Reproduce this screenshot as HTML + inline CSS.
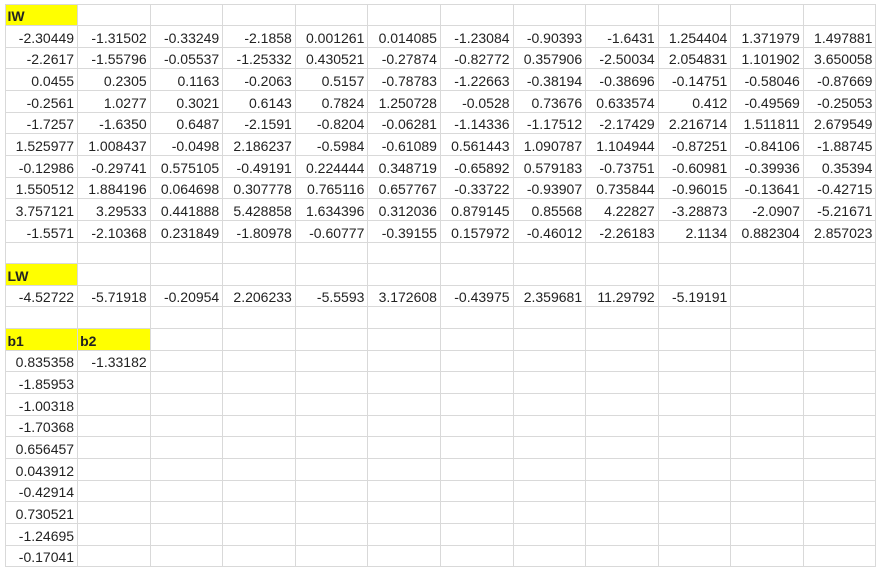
<!DOCTYPE html>
<html><head><style>
html,body{margin:0;padding:0;background:#fff;width:880px;height:572px;overflow:hidden}
table{position:absolute;left:4.5px;top:3.5px;border-collapse:collapse;table-layout:fixed;width:871px;font-family:"Liberation Sans",sans-serif;font-size:14px;color:#222}
td{border:1px solid #d9d9d9;height:20.65px;padding:0 3px 0 3px;text-align:right;vertical-align:bottom;line-height:18px;white-space:nowrap;overflow:hidden}
td.y{background:#ffff00;font-weight:bold;text-align:left;padding-left:2px}
</style></head><body>
<table>
<colgroup><col span="12" style="width:72.58px"></colgroup>
<tr><td class="y">IW</td><td></td><td></td><td></td><td></td><td></td><td></td><td></td><td></td><td></td><td></td><td></td></tr>
<tr><td>-2.30449</td><td>-1.31502</td><td>-0.33249</td><td>-2.1858</td><td>0.001261</td><td>0.014085</td><td>-1.23084</td><td>-0.90393</td><td>-1.6431</td><td>1.254404</td><td>1.371979</td><td>1.497881</td></tr>
<tr><td>-2.2617</td><td>-1.55796</td><td>-0.05537</td><td>-1.25332</td><td>0.430521</td><td>-0.27874</td><td>-0.82772</td><td>0.357906</td><td>-2.50034</td><td>2.054831</td><td>1.101902</td><td>3.650058</td></tr>
<tr><td>0.0455</td><td>0.2305</td><td>0.1163</td><td>-0.2063</td><td>0.5157</td><td>-0.78783</td><td>-1.22663</td><td>-0.38194</td><td>-0.38696</td><td>-0.14751</td><td>-0.58046</td><td>-0.87669</td></tr>
<tr><td>-0.2561</td><td>1.0277</td><td>0.3021</td><td>0.6143</td><td>0.7824</td><td>1.250728</td><td>-0.0528</td><td>0.73676</td><td>0.633574</td><td>0.412</td><td>-0.49569</td><td>-0.25053</td></tr>
<tr><td>-1.7257</td><td>-1.6350</td><td>0.6487</td><td>-2.1591</td><td>-0.8204</td><td>-0.06281</td><td>-1.14336</td><td>-1.17512</td><td>-2.17429</td><td>2.216714</td><td>1.511811</td><td>2.679549</td></tr>
<tr><td>1.525977</td><td>1.008437</td><td>-0.0498</td><td>2.186237</td><td>-0.5984</td><td>-0.61089</td><td>0.561443</td><td>1.090787</td><td>1.104944</td><td>-0.87251</td><td>-0.84106</td><td>-1.88745</td></tr>
<tr><td>-0.12986</td><td>-0.29741</td><td>0.575105</td><td>-0.49191</td><td>0.224444</td><td>0.348719</td><td>-0.65892</td><td>0.579183</td><td>-0.73751</td><td>-0.60981</td><td>-0.39936</td><td>0.35394</td></tr>
<tr><td>1.550512</td><td>1.884196</td><td>0.064698</td><td>0.307778</td><td>0.765116</td><td>0.657767</td><td>-0.33722</td><td>-0.93907</td><td>0.735844</td><td>-0.96015</td><td>-0.13641</td><td>-0.42715</td></tr>
<tr><td>3.757121</td><td>3.29533</td><td>0.441888</td><td>5.428858</td><td>1.634396</td><td>0.312036</td><td>0.879145</td><td>0.85568</td><td>4.22827</td><td>-3.28873</td><td>-2.0907</td><td>-5.21671</td></tr>
<tr><td>-1.5571</td><td>-2.10368</td><td>0.231849</td><td>-1.80978</td><td>-0.60777</td><td>-0.39155</td><td>0.157972</td><td>-0.46012</td><td>-2.26183</td><td>2.1134</td><td>0.882304</td><td>2.857023</td></tr>
<tr><td></td><td></td><td></td><td></td><td></td><td></td><td></td><td></td><td></td><td></td><td></td><td></td></tr>
<tr><td class="y">LW</td><td></td><td></td><td></td><td></td><td></td><td></td><td></td><td></td><td></td><td></td><td></td></tr>
<tr><td>-4.52722</td><td>-5.71918</td><td>-0.20954</td><td>2.206233</td><td>-5.5593</td><td>3.172608</td><td>-0.43975</td><td>2.359681</td><td>11.29792</td><td>-5.19191</td><td></td><td></td></tr>
<tr><td></td><td></td><td></td><td></td><td></td><td></td><td></td><td></td><td></td><td></td><td></td><td></td></tr>
<tr><td class="y">b1</td><td class="y">b2</td><td></td><td></td><td></td><td></td><td></td><td></td><td></td><td></td><td></td><td></td></tr>
<tr><td>0.835358</td><td>-1.33182</td><td></td><td></td><td></td><td></td><td></td><td></td><td></td><td></td><td></td><td></td></tr>
<tr><td>-1.85953</td><td></td><td></td><td></td><td></td><td></td><td></td><td></td><td></td><td></td><td></td><td></td></tr>
<tr><td>-1.00318</td><td></td><td></td><td></td><td></td><td></td><td></td><td></td><td></td><td></td><td></td><td></td></tr>
<tr><td>-1.70368</td><td></td><td></td><td></td><td></td><td></td><td></td><td></td><td></td><td></td><td></td><td></td></tr>
<tr><td>0.656457</td><td></td><td></td><td></td><td></td><td></td><td></td><td></td><td></td><td></td><td></td><td></td></tr>
<tr><td>0.043912</td><td></td><td></td><td></td><td></td><td></td><td></td><td></td><td></td><td></td><td></td><td></td></tr>
<tr><td>-0.42914</td><td></td><td></td><td></td><td></td><td></td><td></td><td></td><td></td><td></td><td></td><td></td></tr>
<tr><td>0.730521</td><td></td><td></td><td></td><td></td><td></td><td></td><td></td><td></td><td></td><td></td><td></td></tr>
<tr><td>-1.24695</td><td></td><td></td><td></td><td></td><td></td><td></td><td></td><td></td><td></td><td></td><td></td></tr>
<tr><td>-0.17041</td><td></td><td></td><td></td><td></td><td></td><td></td><td></td><td></td><td></td><td></td><td></td></tr>
</table>
</body></html>
